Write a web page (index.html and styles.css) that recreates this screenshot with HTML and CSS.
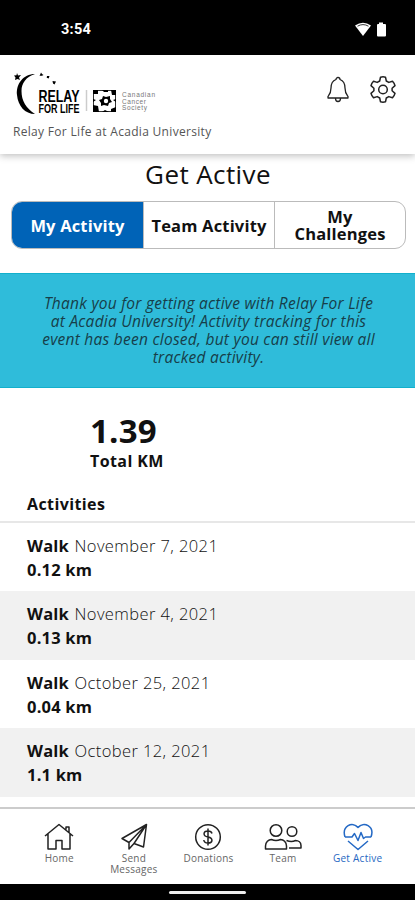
FILE: index.html
```html
<!DOCTYPE html>
<html lang="en">
<head>
<meta charset="utf-8">
<title>Get Active</title>
<link rel="stylesheet" href="styles.css">
</head>
<body>
<div class="status">
  <span class="clock">3:54</span>
  <svg class="status-icons" width="32" height="16" viewBox="0 0 32 16" fill="#fff">
    <path d="M0 3.500Q8 -2 16 3.500L8 14Z"/><path d="M2.500 4.200Q8 1 13.500 4.200" fill="none" stroke="#000" stroke-width=".8"/>
    <path d="M24 0.500h4v1.500h2q1 0 1 1v10.500q0 1-1 1h-7q-1 0-1-1V3q0-1 1-1h1z"/>
  </svg>
</div>
<header class="header">
  <div class="brand-row">
    <svg class="logo" width="146" height="46" viewBox="0 0 146 46">
      <path d="M22 3C10 3 3 13 4 24C5 35 12 43 22 43C13 37 8.500 30 8.500 20C8.500 12 13 6 22 3Z"/>
      <path d="M4 2l1 2.500 3-.5-2 2.500 1 2.500-2.500-1L2 9l.5-2.500L1 4.500l2.500-.2zM28 1.500l1 1.500 1.500 1-1.500.8h-2.500l.8-1.500zM34 5l2.500 0-.8 2.500-2-.8zM39.500 10l3.500.5-1.500 3-1.500-1z"/>
      <text class="relay" x="25.500" y="30.500" textLength="41" lengthAdjust="spacingAndGlyphs">RELAY</text>
      <text class="forlife" x="25.500" y="41.500" textLength="41" lengthAdjust="spacingAndGlyphs">FOR LIFE</text>
      <path d="M73.500 19v21" stroke="#ccc" stroke-width="1.500"/>
      <rect x="80.500" y="19.500" width="22" height="21" fill="#fff" stroke="#333"/>
      <path d="M80 19h5v4h-5zM89 19h6v2h-4zM98 19h5v5h-4zM80 34l5 1 1 6h-6zM98 38l5-2v5h-5zM89 41l3-2 4 2zM80 28l3 1-3 2zM103 28l-3 1 3 2z"/>
      <path d="M90 25l3 1 4-1 0 3 2 3-3 1-1 3-4-1-3 1 0-3-2-3 3-1z"/><circle cx="93" cy="30" r="2.200" fill="#fff"/>
      <g class="society"><text x="109" y="26" textLength="33">Canadian</text><text x="109" y="32.500" textLength="24">Cancer</text><text x="109" y="39" textLength="25">Society</text></g>
    </svg>
    <svg class="bell" width="24" height="28" viewBox="0 0 24 28" fill="none" stroke="#222" stroke-width="1.300" stroke-linejoin="round">
      <path d="M10 3.500a2 2 0 0 1 4 0C18 5 19 8 19 12c0 5 1 6 3 8.500V22H2v-1.500C4 18 5 17 5 12c0-4 1-7 5-8.500zM9.500 22.500a2.500 3 0 0 0 5 0"/>
    </svg>
    <svg class="gear" width="28" height="28" viewBox="0 0 28 28" fill="none" stroke="#222" stroke-width="1.500" stroke-linejoin="round">
      <path d="M11.500 2.200Q14 1.500 16.500 2.200L17.300 6 19.800 7.400 23.500 6.200Q25.300 8 26 10.600L23.100 13.200V15.800L26 18.400Q25.300 21 23.500 22.800L19.800 21.600 17.300 23 16.500 26.800Q14 27.500 11.500 26.800L10.700 23 8.200 21.600 4.500 22.800Q2.700 21 2 18.400L4.900 15.800V13.200L2 10.600Q2.700 8 4.500 6.200L8.200 7.400 10.700 6Z"/><circle cx="14" cy="14.500" r="4.300"/>
    </svg>
  </div>
  <div class="event">Relay For Life at Acadia University</div>
</header>
<main class="main">
  <h1 class="title">Get Active</h1>
  <div class="tabs">
    <div class="tab active">My Activity</div>
    <div class="tab">Team Activity</div>
    <div class="tab">My<br>Challenges</div>
  </div>
  <div class="banner">Thank you for getting active with Relay For Life<br>at Acadia University! Activity tracking for this<br>event has been closed, but you can still view all<br>tracked activity.</div>
  <div class="total"><div class="number">1.39</div><div class="unit">Total KM</div></div>
  <h2 class="list-title">Activities</h2>
  <div class="row"><div><b>Walk</b> <span>November 7, 2021</span></div><b>0.12 km</b></div>
  <div class="row"><div><b>Walk</b> <span>November 4, 2021</span></div><b>0.13 km</b></div>
  <div class="row"><div><b>Walk</b> <span>October 25, 2021</span></div><b>0.04 km</b></div>
  <div class="row"><div><b>Walk</b> <span>October 12, 2021</span></div><b>1.1 km</b></div>
</main>
<nav class="nav">
  <div class="item"><svg width="30" height="28" viewBox="0 0 30 28"><path d="M1 13L15 1.500 29 13M4 11v15h8v-8.500h6V26h8V11M22 6.500V4h3v5.500"/></svg>Home</div>
  <div class="item"><svg width="28" height="28" viewBox="0 0 28 28"><path d="M26.500 1.500L2 15.500l7 4L26.500 1.500 23.500 24l-9.500-3.500L26.500 1.500M9 19.500V26l5-5.500"/></svg>Send<br>Messages</div>
  <div class="item"><svg width="28" height="28" viewBox="0 0 28 28"><circle cx="14" cy="14" r="12.300"/><path d="M18 10.500c-.5-2-2-2.500-4-2.500-5 0-5.500 5 0 6s5 6 0 6c-2.500 0-4-1-4.200-3M14 5.500v17"/></svg>Donations</div>
  <div class="item"><svg width="38" height="28" viewBox="0 0 38 28"><circle cx="12" cy="7.500" r="5.800"/><circle cx="28" cy="8.500" r="4.800"/><path d="M1.500 26v-3c0-4 3-6.500 6-6.500q4.500 2 9 0c3 0 6 2.500 6 6.500v3zM22.500 17.500q5 2 9 0c3 0 5.500 2 5.500 5V25H25"/></svg>Team</div>
  <div class="item current"><svg width="30" height="28" viewBox="0 0 30 28"><path d="M2 14C-1.500 3 9.500-2 15 4.500c5.500-6.500 17-1.500 13 9.500M2 14h7l2.500-3.500 3.500 7 3-8 2.500 6 2-1.500H28M5 18l10 8.500L25 18"/></svg>Get Active</div>
</nav>
<div class="gesture"><div class="pill"></div></div>
</body>
</html>
```
FILE: styles.css
```css
* { box-sizing: border-box; }
body { margin: 0; width: 415px; height: 900px; overflow: hidden; display: flex; flex-direction: column; background: #fff; color: #111; font-family: "Open Sans", sans-serif; }
.status { height: 55px; flex: none; background: #000; display: flex; justify-content: space-between; padding: 20px 28px 0 61px; }
.clock { color: #fff; font: 700 14.5px/20px Roboto, sans-serif; letter-spacing: .3px; }
.status-icons { margin-top: 2px; }
.header { height: 99px; flex: none; padding: 16px 18px 0 13px; box-shadow: 0 2px 7px rgba(0,0,0,.25); }
.brand-row { display: flex; align-items: flex-start; height: 50px; }
.logo { margin-right: auto; }
.relay { font: 700 16px "Liberation Sans", sans-serif; }
.forlife { font: 700 12px "Liberation Sans", sans-serif; }
.society { font: 400 6.5px "Liberation Sans", sans-serif; fill: #777; }
.bell { margin: 5px 19px 0 0; }
.gear { margin-top: 4px; }
.event { margin-top: 2px; font-size: 12px; line-height: 17px; color: #555; letter-spacing: .31px; white-space: nowrap; }
.main { flex: 1; }
.title { margin: 3px 0 9px; padding-left: 1px; text-align: center; font-size: 26px; font-weight: 500; line-height: 35px; letter-spacing: .4px; }
.tabs { display: grid; grid-template-columns: 131px 131px 1fr; height: 48px; margin: 0 9px 0 11px; border: 1px solid #bbb; border-radius: 11px; overflow: hidden; }
.tab { display: flex; align-items: center; justify-content: center; text-align: center; border-left: 1px solid #bbb; font-size: 16.5px; font-weight: 700; line-height: 17px; letter-spacing: .18px; white-space: nowrap; }
.tab.active { background: #0063b7; color: #fff; border: 0; }
.banner { height: 115px; margin-top: 23.5px; padding: 20px 0 0 2px; background: #2fbcda; border: solid #12b0cc; border-width: 1px 0; color: #173e49; text-align: center; font-size: 15.5px; font-style: italic; line-height: 18.300px; letter-spacing: .26px; white-space: nowrap; }
.total { margin: 23px 0 0 90px; }
.number { font-size: 33px; font-weight: 700; line-height: 39px; letter-spacing: .2px; }
.unit { font-size: 16px; font-weight: 700; line-height: 22px; letter-spacing: .4px; }
.list-title { margin: 20px 0 0; padding: 0 27px; height: 31px; border-bottom: 2px solid #e7e7e7; font-size: 16px; line-height: 24px; letter-spacing: .4px; }
.row { height: 68.500px; padding: 11px 27px 0; font-size: 16.5px; line-height: 24px; letter-spacing: .2px; }
.row:nth-of-type(odd) { background: #f1f1f1; }
.row span { margin-left: 1px; font-weight: 300; letter-spacing: .4px; }
.nav { height: 77px; flex: none; display: flex; padding: 14px 20px 0 22px; border-top: 2px solid #ccc; background: #fff; }
.item { flex: 1; display: flex; flex-direction: column; align-items: center; text-align: center; font-size: 10px; line-height: 11px; letter-spacing: .25px; color: #666; }
.item svg { flex: none; margin-bottom: 2px; fill: none; stroke: #222; stroke-width: 1.500; stroke-linejoin: round; }
.current { color: #2667c2; }
.current svg { stroke: #2469c5; }
.gesture { height: 16px; flex: none; background: #000; display: flex; justify-content: center; padding-top: 7px; }
.pill { width: 77px; height: 3px; border-radius: 2px; background: #eee; }
```
